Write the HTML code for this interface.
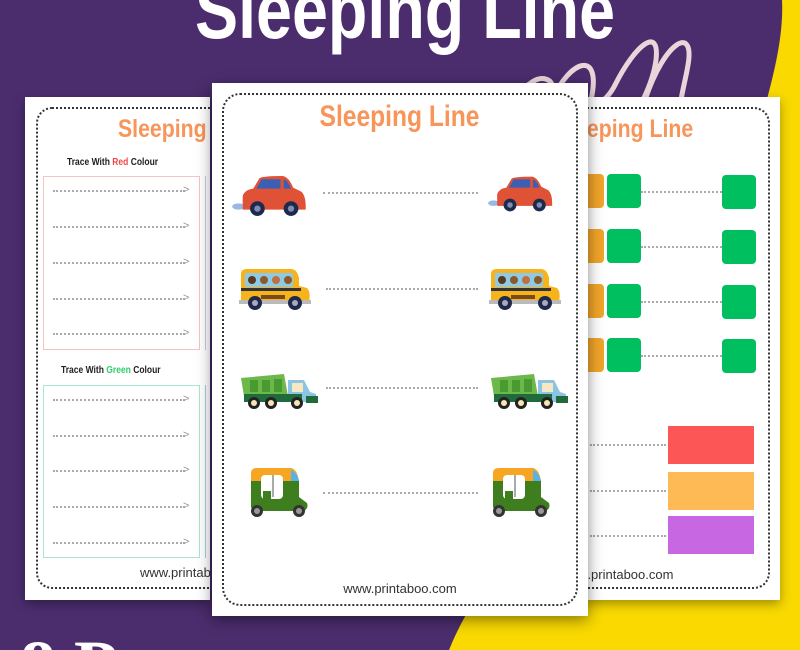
<!DOCTYPE html>
<html style="overflow:hidden"><head><meta charset="utf-8"><style>
*{margin:0;padding:0;box-sizing:border-box}
body{width:800px;height:650px;overflow:hidden;background:#4b2d6e;position:relative;font-family:"Liberation Sans",sans-serif}
.abs{position:absolute}
.card{position:absolute;background:#fff;box-shadow:0 4px 10px rgba(0,0,0,.35);overflow:hidden}
.dash{position:absolute;border:2px dotted #333;border-radius:16px}
.dl{position:absolute;border-top:2px dotted #aaa;height:0}
.t{position:absolute;font-weight:bold;font-size:10px;color:#222;transform:scaleX(.85);transform-origin:left}
.foot{position:absolute;font-size:13px;color:#333}
.sq{position:absolute;background:#00bf5f;border-radius:4px;width:34px;height:34px}
</style></head><body>
<svg class="abs" style="left:0;top:0" width="800" height="650">
<path d="M782 0 L800 0 L800 650 L449 650 C475 585 530 520 600 470 C680 410 720 300 740 200 C755 130 785 60 782 0Z" fill="#f9d900"/>
<path d="M520 95 C535 70 560 75 552 100 M552 100 C570 60 600 50 592 95 C588 110 605 105 615 85 C635 45 660 25 656 60 C652 90 635 110 645 100 C665 40 695 25 688 65 C683 95 672 120 695 100" fill="none" stroke="#ead6da" stroke-width="5" stroke-linecap="round"/>
<text x="405" y="38" text-anchor="middle" font-family="Liberation Sans" font-weight="bold" font-size="80" fill="#fff" textLength="420" lengthAdjust="spacingAndGlyphs">Sleeping Line</text>
<text x="20" y="690" font-family="Liberation Serif" font-weight="bold" font-size="72" fill="#fff">8 P</text>
<defs>
<symbol id="car" viewBox="0 0 72 40"><ellipse cx="6" cy="30" rx="6" ry="3" fill="#9bb7e8"/><path d="M10 32 L10 20 Q12 14 20 13 L26 3 Q30 1 48 1 Q54 2 58 12 L66 16 Q70 20 70 30 L70 33 L10 33Z" fill="#df5236"/><path d="M28 4 L46 4 L46 13 L23 13Z" fill="#3a5fb5"/><path d="M49 4 Q53 5 56 13 L49 13Z" fill="#3a5fb5"/><circle cx="24" cy="32" r="7" fill="#1e2a4d"/><circle cx="24" cy="32" r="3" fill="#7f8db0"/><circle cx="56" cy="32" r="7" fill="#1e2a4d"/><circle cx="56" cy="32" r="3" fill="#7f8db0"/></symbol>
<symbol id="bus" viewBox="0 0 72 42"><path d="M2 6 Q2 1 8 1 L52 1 Q58 1 60 10 L60 18 L68 20 Q72 24 70 34 L2 34Z" fill="#f6b31b"/><rect x="6" y="5" width="48" height="14" fill="#8ec9e8"/><circle cx="13" cy="12" r="4" fill="#5a3a1e"/><circle cx="25" cy="12" r="4" fill="#8b5a2b"/><circle cx="37" cy="12" r="4" fill="#c0703a"/><circle cx="49" cy="12" r="4" fill="#8b5a2b"/><rect x="2" y="20" width="60" height="3" fill="#333"/><rect x="22" y="27" width="24" height="4" fill="#7a4a1e"/><rect x="0" y="32" width="72" height="4" fill="#bbb"/><circle cx="16" cy="35" r="7" fill="#1e2a4d"/><circle cx="16" cy="35" r="3" fill="#aab"/><circle cx="56" cy="35" r="7" fill="#1e2a4d"/><circle cx="56" cy="35" r="3" fill="#aab"/></symbol>
<symbol id="truck" viewBox="0 0 78 42"><path d="M1 10 L44 6 L48 28 L4 28Z" fill="#6db84a"/><rect x="10" y="12" width="8" height="12" fill="#4a9a32"/><rect x="22" y="12" width="8" height="12" fill="#4a9a32"/><rect x="34" y="11" width="8" height="13" fill="#4a9a32"/><path d="M48 12 L64 12 L70 24 L76 26 L76 34 L48 34Z" fill="#8cc4e4"/><rect x="52" y="15" width="11" height="9" fill="#f7e7c4"/><rect x="4" y="26" width="58" height="8" fill="#1f6b3c"/><rect x="66" y="28" width="12" height="7" fill="#1f6b3c"/><circle cx="14" cy="35" r="6" fill="#222"/><circle cx="14" cy="35" r="3" fill="#f5e6b8"/><circle cx="31" cy="35" r="6" fill="#222"/><circle cx="31" cy="35" r="3" fill="#f5e6b8"/><circle cx="57" cy="35" r="6" fill="#222"/><circle cx="57" cy="35" r="3" fill="#f5e6b8"/></symbol>
<symbol id="rick" viewBox="0 0 62 52"><path d="M4 6 Q4 1 10 1 L44 1 Q50 2 52 14 L4 14Z" fill="#f6a623"/><path d="M44 3 Q50 5 52 14 L44 14Z" fill="#5ab1e6"/><path d="M4 14 L52 14 L52 30 L60 36 Q62 42 56 44 L6 44 L4 40Z" fill="#3f7e1e"/><rect x="14" y="8" width="22" height="24" rx="4" fill="#fff"/><rect x="25" y="8" width="2" height="22" fill="#aaa"/><rect x="16" y="24" width="8" height="12" fill="#3f7e1e"/><circle cx="10" cy="44" r="6" fill="#333"/><circle cx="10" cy="44" r="3" fill="#999"/><circle cx="52" cy="44" r="6" fill="#333"/><circle cx="52" cy="44" r="3" fill="#999"/></symbol>
</defs>
</svg>

<div class="card" style="left:25px;top:97px;width:185px;height:503px">
  <div class="dash" style="left:11px;top:10px;width:200px;height:482px"></div>
  <div class="abs" style="left:93px;top:18px;font-size:25px;font-weight:bold;color:#f7955a;transform:scaleX(.85);transform-origin:left">Sleeping</div>
  <div class="t" style="left:42px;top:60px">Trace With <span style="color:#f04848">Red</span> Colour</div>
  <div class="abs" style="left:18px;top:79px;width:157px;height:174px;border:1px solid #f6c4c4"></div>
  <div class="t" style="left:36px;top:268px">Trace With <span style="color:#2fcf6a">Green</span> Colour</div>
  <div class="abs" style="left:18px;top:288px;width:157px;height:173px;border:1px solid #a8e8cc"></div>
  <div class="abs" style="left:180px;top:79px;width:5px;height:174px;border-left:1px solid #c8c8ea"></div>
  <div class="abs" style="left:180px;top:288px;width:5px;height:173px;border-left:1px solid #a8c8e8"></div>
  <div class="foot" style="left:115px;top:468px">www.printaboo.com</div>
</div>

<div class="card" style="left:585px;top:97px;width:195px;height:503px">
  <div class="dash" style="left:-30px;top:10px;width:215px;height:482px"></div>
  <div class="abs" style="left:-30px;top:18px;font-size:25px;font-weight:bold;color:#f7955a;transform:scaleX(.85);transform-origin:left">Sleeping Line</div>
  <div class="foot" style="left:-25px;top:470px">www.printaboo.com</div>
</div>
<div class="abs" style="left:588px;top:174px;width:16px;height:34px;background:#f0a52a;border-radius:0 4px 4px 0"></div>
<div class="abs" style="left:588px;top:229px;width:16px;height:34px;background:#f0a52a;border-radius:0 4px 4px 0"></div>
<div class="abs" style="left:588px;top:284px;width:16px;height:34px;background:#f0a52a;border-radius:0 4px 4px 0"></div>
<div class="abs" style="left:588px;top:338px;width:16px;height:34px;background:#f0a52a;border-radius:0 4px 4px 0"></div>
<div class="sq" style="left:607px;top:174px"></div><div class="sq" style="left:722px;top:175px"></div>
<div class="sq" style="left:607px;top:229px"></div><div class="sq" style="left:722px;top:230px"></div>
<div class="sq" style="left:607px;top:284px"></div><div class="sq" style="left:722px;top:285px"></div>
<div class="sq" style="left:607px;top:338px"></div><div class="sq" style="left:722px;top:339px"></div>
<div class="dl" style="left:641px;top:191px;width:81px"></div>
<div class="dl" style="left:641px;top:246px;width:81px"></div>
<div class="dl" style="left:641px;top:301px;width:81px"></div>
<div class="dl" style="left:641px;top:355px;width:81px"></div>
<div class="abs" style="left:668px;top:426px;width:86px;height:38px;background:#fd5656"></div>
<div class="abs" style="left:668px;top:472px;width:86px;height:38px;background:#fdba55"></div>
<div class="abs" style="left:668px;top:516px;width:86px;height:38px;background:#c768e2"></div>
<div class="dl" style="left:590px;top:444px;width:76px"></div>
<div class="dl" style="left:590px;top:490px;width:76px"></div>
<div class="dl" style="left:590px;top:535px;width:76px"></div>

<div class="dl" style="left:53px;top:190px;width:132px"></div><div class="abs" style="left:183px;top:184px;font-size:11px;color:#999">&gt;</div>
<div class="dl" style="left:53px;top:226px;width:132px"></div><div class="abs" style="left:183px;top:220px;font-size:11px;color:#999">&gt;</div>
<div class="dl" style="left:53px;top:262px;width:132px"></div><div class="abs" style="left:183px;top:256px;font-size:11px;color:#999">&gt;</div>
<div class="dl" style="left:53px;top:298px;width:132px"></div><div class="abs" style="left:183px;top:292px;font-size:11px;color:#999">&gt;</div>
<div class="dl" style="left:53px;top:333px;width:132px"></div><div class="abs" style="left:183px;top:327px;font-size:11px;color:#999">&gt;</div>
<div class="dl" style="left:53px;top:399px;width:132px"></div><div class="abs" style="left:183px;top:393px;font-size:11px;color:#999">&gt;</div>
<div class="dl" style="left:53px;top:435px;width:132px"></div><div class="abs" style="left:183px;top:429px;font-size:11px;color:#999">&gt;</div>
<div class="dl" style="left:53px;top:470px;width:132px"></div><div class="abs" style="left:183px;top:464px;font-size:11px;color:#999">&gt;</div>
<div class="dl" style="left:53px;top:506px;width:132px"></div><div class="abs" style="left:183px;top:500px;font-size:11px;color:#999">&gt;</div>
<div class="dl" style="left:53px;top:542px;width:132px"></div><div class="abs" style="left:183px;top:536px;font-size:11px;color:#999">&gt;</div>

<div class="card" style="left:212px;top:83px;width:376px;height:533px;box-shadow:0 4px 14px rgba(0,0,0,.45)">
  <div class="dash" style="left:10px;top:10px;width:356px;height:513px;border-radius:18px"></div>
  <div class="abs" style="left:0;top:17px;width:376px;text-align:center"><span style="display:inline-block;font-size:30px;font-weight:bold;color:#f7955a;transform:scaleX(.82)">Sleeping Line</span></div>
  <svg class="abs" style="left:20px;top:92px" width="76" height="42"><use href="#car"/></svg>
  <svg class="abs" style="left:276px;top:92px" width="66" height="38"><use href="#car"/></svg>
  <svg class="abs" style="left:27px;top:185px" width="72" height="42"><use href="#bus"/></svg>
  <svg class="abs" style="left:277px;top:185px" width="72" height="42"><use href="#bus"/></svg>
  <svg class="abs" style="left:28px;top:285px" width="78" height="42"><use href="#truck"/></svg>
  <svg class="abs" style="left:278px;top:285px" width="78" height="42"><use href="#truck"/></svg>
  <svg class="abs" style="left:35px;top:384px" width="62" height="52"><use href="#rick"/></svg>
  <svg class="abs" style="left:277px;top:384px" width="62" height="52"><use href="#rick"/></svg>
  <div class="dl" style="left:111px;top:109px;width:155px"></div>
  <div class="dl" style="left:114px;top:205px;width:152px"></div>
  <div class="dl" style="left:114px;top:304px;width:152px"></div>
  <div class="dl" style="left:111px;top:409px;width:155px"></div>
  <div class="foot" style="left:0;top:498px;width:376px;text-align:center">www.printaboo.com</div>
</div>
</body></html>
